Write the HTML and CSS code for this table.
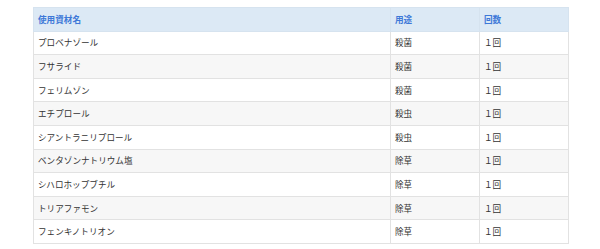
FILE: index.html
```html
<!DOCTYPE html>
<html lang="ja">
<head>
<meta charset="utf-8">
<link rel="stylesheet" href="styles.css">
</head>
<body>
<div class="wrap">
<table class="usage">
  <thead>
    <tr><th class="c-name">使用資材名</th><th class="c-use">用途</th><th class="c-count">回数</th></tr>
  </thead>
  <tbody>
    <tr><td>プロベナゾール</td><td>殺菌</td><td>１回</td></tr>
    <tr><td>フサライド</td><td>殺菌</td><td>１回</td></tr>
    <tr><td>フェリムゾン</td><td>殺菌</td><td>１回</td></tr>
    <tr><td>エチプロール</td><td>殺虫</td><td>１回</td></tr>
    <tr><td>シアントラニリプロール</td><td>殺虫</td><td>１回</td></tr>
    <tr><td>ベンタゾンナトリウム塩</td><td>除草</td><td>１回</td></tr>
    <tr><td>シハロホップブチル</td><td>除草</td><td>１回</td></tr>
    <tr><td>トリアファモン</td><td>除草</td><td>１回</td></tr>
    <tr><td>フェンキノトリオン</td><td>除草</td><td>１回</td></tr>
  </tbody>
</table>
</div>
</body>
</html>
```
FILE: styles.css
```css
html, body {
  margin: 0;
  padding: 0;
  background: #ffffff;
}
.wrap {
  padding: 7px 0 0 33px;
}
.usage {
  border-collapse: collapse;
  width: 535px;
  table-layout: fixed;
  font-family: "Noto Sans CJK JP", "Noto Sans", sans-serif;
  font-size: 8.6px;
  color: #333333;
}
.usage th, .usage td {
  border: 1px solid #e2e2e2;
  height: 23.6px;
  padding: 0 0 1px 4px;
  text-align: left;
  vertical-align: middle;
  box-sizing: border-box;
}
.usage th {
  background: #dce9f5;
  color: #3d78d8;
  font-weight: 700;
  border-color: #d6e3ef;
}
.c-name { width: 357px; }
.c-use { width: 89px; }
.c-count { width: 89px; }
.usage tbody tr:nth-child(even) td {
  background: #f7f7f7;
}
```
